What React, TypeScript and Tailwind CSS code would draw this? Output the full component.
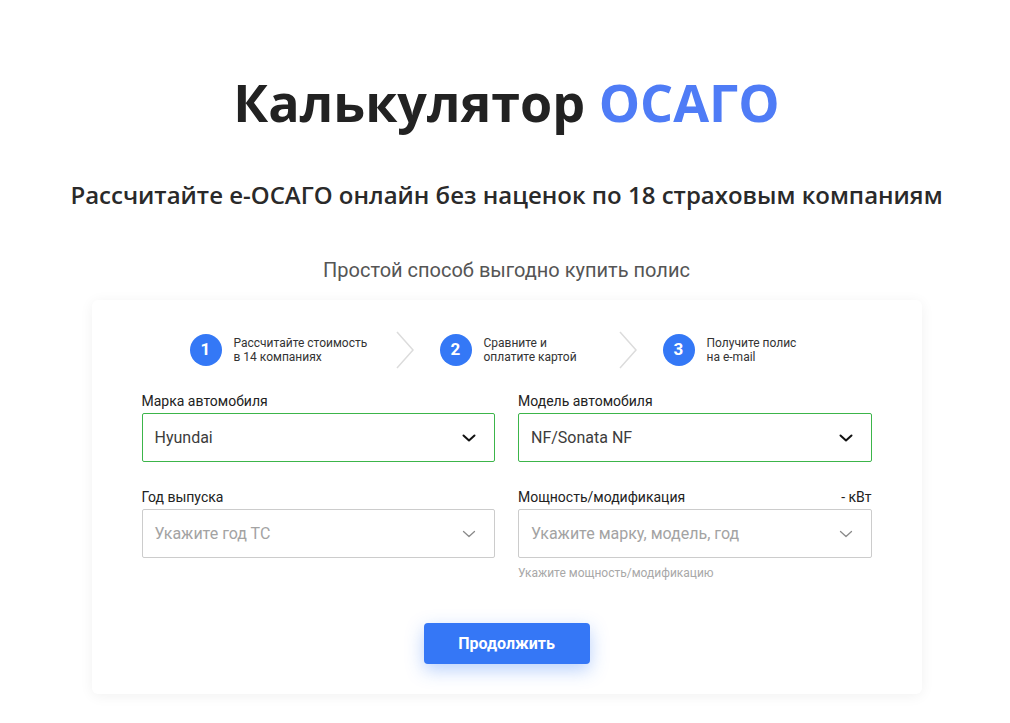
import React from 'react';

const steps = [
  { n: 1, lines: ['Рассчитайте стоимость', 'в 14 компаниях'], w: 'w-[162px]' },
  { n: 2, lines: ['Сравните и', 'оплатите картой'], w: 'w-[135px]' },
  { n: 3, lines: ['Получите полис', 'на e-mail'], w: 'w-[120px]' },
];

function Chevron({ light }: { light?: boolean }) {
  return (
    <svg width="14" height="8" viewBox="0 0 14 8" fill="none">
      <path
        d="M1.5 1.5L7 6.5L12.5 1.5"
        stroke={light ? '#8a8a8a' : '#111111'}
        strokeWidth={light ? 1.3 : 2}
        strokeLinecap="round"
        strokeLinejoin="round"
      />
    </svg>
  );
}

function StepArrow() {
  return (
    <svg width="18" height="38" viewBox="0 0 18 38" fill="none" className="mr-[26px] shrink-0">
      <path d="M1 1L17 19L1 37" stroke="#dcdcdc" strokeWidth="1.5" />
    </svg>
  );
}

interface FieldProps {
  label: string;
  value?: string;
  placeholder?: string;
  extra?: string;
  hint?: string;
}

function Field({ label, value, placeholder, extra, hint }: FieldProps) {
  const filled = !!value;
  return (
    <div className="flex flex-col">
      <div className="flex justify-between items-end h-[20px] text-[14px] text-[#222] leading-[20px]">
        <span>{label}</span>
        {extra && <span>{extra}</span>}
      </div>
      <div
        className={`mt-[2px] h-[49px] flex items-center justify-between pl-[12px] pr-[18px] rounded-[2px] border ${
          filled ? 'border-[#3cb54a]' : 'border-[#cccccc]'
        }`}
      >
        <span className={`text-[16px] ${filled ? 'text-[#3c3c3c]' : 'text-[#a3a3a3]'}`}>
          {value || placeholder}
        </span>
        <Chevron light={!filled} />
      </div>
      {hint && <div className="mt-[7px] text-[12px] text-[#a8a8a8] leading-[16px]">{hint}</div>}
    </div>
  );
}

export default function App() {
  return (
    <div
      className="min-h-[723px] bg-white flex flex-col items-center pl-[3px]"
      style={{ fontFamily: 'Roboto, "Liberation Sans", sans-serif' }}
    >
      <h1
        className="mt-[67px] text-[52px] font-bold leading-[70px] text-[#222]"
        style={{ fontFamily: '"Open Sans", "Liberation Sans", sans-serif' }}
      >
        Калькулятор <span className="text-[#4f7cf6]">ОСАГО</span>
      </h1>
      <p
        className="mt-[43px] text-[24px] font-semibold leading-[30px] text-[#2a2a2a]"
        style={{ fontFamily: '"Open Sans", "Liberation Sans", sans-serif' }}
      >
        Рассчитайте е-ОСАГО онлайн без наценок по 18 страховым компаниям
      </p>
      <p className="mt-[48px] text-[20px] leading-[24px] text-[#555]">Простой способ выгодно купить полис</p>

      <div className="mt-[18px] w-[830px] bg-white rounded-[6px] shadow-[0_2px_14px_rgba(0,0,0,0.06)] px-[50px] pt-[31px] pb-[30px]">
        <div className="flex items-center pl-[48px]">
          {steps.map((s, i) => (
            <React.Fragment key={s.n}>
              {i > 0 && <StepArrow />}
              <div className="flex items-center">
                <div className="w-[32px] h-[32px] rounded-full bg-[#3478f6] text-white font-bold text-[17px] flex items-center justify-center shrink-0">
                  {s.n}
                </div>
                <div className={`ml-[12px] text-[12px] leading-[14px] text-[#333] ${s.w}`}>
                  {s.lines.map((l) => (
                    <div key={l}>{l}</div>
                  ))}
                </div>
              </div>
            </React.Fragment>
          ))}
        </div>

        <div className="mt-[22px] grid grid-cols-2 gap-x-[23px] gap-y-[25px]">
          <Field label="Марка автомобиля" value="Hyundai" />
          <Field label="Модель автомобиля" value="NF/Sonata NF" />
          <Field label="Год выпуска" placeholder="Укажите год ТС" />
          <Field
            label="Мощность/модификация"
            extra="- кВт"
            placeholder="Укажите марку, модель, год"
            hint="Укажите мощность/модификацию"
          />
        </div>

        <div className="mt-[42px] flex justify-center">
          <button className="w-[166px] h-[41px] rounded-[4px] bg-[#3577f6] text-white font-bold text-[16px] shadow-[0_6px_18px_rgba(53,119,246,0.35)]">
            Продолжить
          </button>
        </div>
      </div>
    </div>
  );
}
